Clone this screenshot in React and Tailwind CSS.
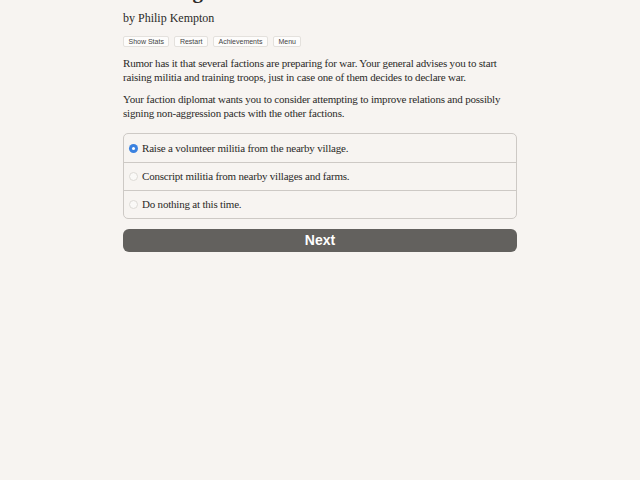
import { useState } from "react";

// Scene page: title header, stat buttons, story text and a choice list
const choices = [
  "Raise a volunteer militia from the nearby village.",
  "Conscript militia from nearby villages and farms.",
  "Do nothing at this time.",
];

const buttons = ["Show Stats", "Restart", "Achievements", "Menu"];

export default function App() {
  const [picked, setPicked] = useState(0);

  return (
    <div className="h-screen w-full overflow-hidden bg-[#f7f4f1] text-[#2b2a28] font-['Liberation_Serif',serif]">
      <div className="mx-auto flex w-[394px] flex-col">
        {/* Title sits mostly above the scroll position */}
        <h1 className="-mt-[22px] text-[21px] font-bold leading-[26px]">A Ruling Realm</h1>
        <div className="mt-[6px] text-[12px] leading-[16px]">by Philip Kempton</div>

        <div className="mt-[10px] flex gap-[5px] font-['Liberation_Sans',sans-serif] text-[7px] text-[#444]">
          {buttons.map((b) => (
            <button
              key={b}
              className="h-[11px] rounded-[2px] border border-[#e4e1dd] bg-[#fdfcfb] px-[4.5px] leading-[9px]"
            >
              {b}
            </button>
          ))}
        </div>

        <p className="mt-[9px] text-[11px] leading-[14px] tracking-[-0.2px]">
          Rumor has it that several factions are preparing for war. Your general advises you to start
          raising militia and training troops, just in case one of them decides to declare war.
        </p>
        <p className="mt-[8px] text-[11px] leading-[14px] tracking-[-0.2px]">
          Your faction diplomat wants you to consider attempting to improve relations and possibly
          signing non-aggression pacts with the other factions.
        </p>

        <div className="mt-[13px] overflow-hidden rounded-[5px] border border-[#cdc9c5]">
          {choices.map((c, i) => (
            <label
              key={c}
              onClick={() => setPicked(i)}
              className={`flex h-[28px] items-center gap-[4px] pl-[5px] text-[11px] tracking-[-0.2px] ${
                i > 0 ? "border-t border-[#cdc9c5]" : ""
              }`}
            >
              <span
                className={`flex h-[9px] w-[9px] items-center justify-center rounded-full ${
                  picked === i ? "bg-[#3b82e0]" : "border border-[#dddad6] bg-[#faf9f7]"
                }`}
              >
                {picked === i && <span className="h-[3px] w-[3px] rounded-full bg-white" />}
              </span>
              {c}
            </label>
          ))}
        </div>

        <button className="mt-[10px] h-[23px] w-full rounded-[6px] bg-[#63615e] font-['Liberation_Sans',sans-serif] text-[14px] font-bold text-white">
          Next
        </button>
      </div>
    </div>
  );
}
